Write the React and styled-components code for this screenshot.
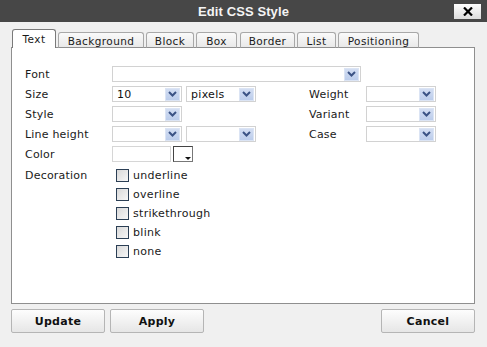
import React from "react";
import styled, { createGlobalStyle } from "styled-components";

const GlobalStyle = createGlobalStyle`
  html, body {
    margin: 0;
    padding: 0;
    background: #f0f0f0;
  }
  body {
    font-family: "DejaVu Sans", Verdana, sans-serif;
    font-size: 11px;
    color: #1a1a1a;
  }
`;

const Dialog = styled.div`
  width: 487px;
  height: 347px;
  background: #f0f0f0;
  display: flex;
  flex-direction: column;
  overflow: hidden;
`;

const TitleBar = styled.div`
  height: 22px;
  background: #474747;
  display: grid;
  grid-template-columns: 1fr auto 1fr;
  align-items: center;
`;

const Title = styled.div`
  grid-column: 2;
  color: #f4f4f4;
  font-family: "Liberation Sans", Arial, sans-serif;
  font-weight: bold;
  font-size: 13px;
  letter-spacing: 0.1px;
`;

const CloseButton = styled.button`
  grid-column: 3;
  justify-self: end;
  margin-right: 6px;
  width: 27px;
  height: 15px;
  padding: 0;
  border: none;
  background: linear-gradient(#ffffff, #dcdcdc);
  display: flex;
  align-items: center;
  justify-content: center;
  cursor: pointer;
`;

const Content = styled.div`
  padding: 7px 12px 0 11px;
  display: flex;
  flex-direction: column;
`;

const TabBar = styled.div`
  display: flex;
  align-items: flex-end;
  padding-left: 1px;
  height: 19px;
  position: relative;
  z-index: 2;
  margin-bottom: -1px;
`;

const Tab = styled.div`
  box-sizing: border-box;
  flex: none;
  width: ${(p) => p.$width}px;
  margin-right: ${(p) => p.$gap}px;
  height: ${(p) => (p.$active ? "19px" : "16px")};
  border: 1px solid ${(p) => (p.$active ? "#7a7a7a" : "#a8a8a8")};
  border-bottom: ${(p) => (p.$active ? "none" : "1px solid #8f8f8f")};
  border-radius: 3px 3px 0 0;
  background: ${(p) =>
    p.$active ? "#ffffff" : "linear-gradient(#fafafa, #e9e9e9)"};
  display: flex;
  align-items: center;
  justify-content: center;
  padding-top: ${(p) => (p.$active ? "0" : "1px")};
  color: #1a1a1a;
  font-size: 10.5px;
  letter-spacing: 0.4px;
  white-space: nowrap;
`;

const Panel = styled.div`
  box-sizing: border-box;
  height: 257px;
  background: #ffffff;
  border: 1px solid #8f8f8f;
  padding: 18px 0 0 13px;
`;

const Form = styled.div`
  display: grid;
  grid-template-columns: 87px 197px 57px auto;
  grid-auto-rows: 16px;
  row-gap: 4px;
  align-items: center;
`;

const Label = styled.div`
  align-self: ${(p) => (p.$top ? "start" : "center")};
  padding-top: ${(p) => (p.$top ? "3px" : "0")};
  letter-spacing: 0.2px;
  white-space: nowrap;
`;

const Controls = styled.div`
  display: flex;
  gap: ${(p) => p.$gap || 4}px;
  grid-column: ${(p) => p.$span || "auto"};
  align-items: center;
`;

const SelectBox = styled.div`
  box-sizing: border-box;
  width: ${(p) => p.$width}px;
  height: 16px;
  border: 1px solid #d2d2d2;
  background: #ffffff;
  display: flex;
  align-items: center;
  justify-content: space-between;
  padding: 0 1px 0 4px;
`;

const SelectValue = styled.span`
  letter-spacing: 0.3px;
  color: #111;
`;

const ArrowBox = styled.span`
  box-sizing: border-box;
  width: 15px;
  height: 13px;
  background: linear-gradient(#d3def2, #bccdec);
  border: 1px solid #dbe4f4;
  display: flex;
  align-items: center;
  justify-content: center;
`;

const ColorInput = styled.div`
  box-sizing: border-box;
  width: 59px;
  height: 16px;
  border: 1px solid #d6d6d6;
  background: #fff;
`;

const ColorPicker = styled.div`
  box-sizing: border-box;
  width: 20px;
  height: 16px;
  border: 1px solid #444;
  border-right-color: #777;
  border-bottom-color: #777;
  background: #fff;
  position: relative;
  &::after {
    content: "";
    position: absolute;
    right: 1px;
    bottom: 1px;
    border-left: 3px solid transparent;
    border-right: 3px solid transparent;
    border-top: 3px solid #111;
  }
`;

const CheckList = styled.div`
  grid-column: 2 / span 3;
  align-self: start;
  display: flex;
  flex-direction: column;
  padding-left: 4px;
`;

const CheckRow = styled.label`
  height: 19px;
  display: flex;
  align-items: center;
  gap: 4px;
  letter-spacing: 0.3px;
`;

const CheckBox = styled.span`
  box-sizing: border-box;
  width: 13px;
  height: 13px;
  border: 1px solid #2b3f55;
  background: linear-gradient(135deg, #d9d9d9, #f7f7f7);
`;

const ButtonRow = styled.div`
  display: flex;
  gap: 5px;
  margin-top: 5px;
`;

const Button = styled.button`
  box-sizing: border-box;
  width: 94px;
  height: 24px;
  margin-left: ${(p) => (p.$push ? "auto" : "0")};
  border: 1px solid #b5b5b5;
  border-radius: 2px;
  background: linear-gradient(#fdfdfd, #e6e6e6);
  font-family: "DejaVu Sans", Verdana, sans-serif;
  font-weight: bold;
  font-size: 11px;
  color: #111;
  letter-spacing: 0.3px;
  padding: 0;
`;

const Chevron = () => (
  <svg width="9" height="6" viewBox="0 0 9 6">
    <path d="M1 1 L4.5 4.5 L8 1" fill="none" stroke="#3b5385" strokeWidth="2" />
  </svg>
);

const Select = ({ width, value }) => (
  <SelectBox $width={width}>
    <SelectValue>{value}</SelectValue>
    <ArrowBox>
      <Chevron />
    </ArrowBox>
  </SelectBox>
);

const tabs = [
  { name: "Text", width: 44, gap: 2 },
  { name: "Background", width: 86, gap: 2 },
  { name: "Block", width: 48, gap: 2 },
  { name: "Box", width: 41, gap: 3 },
  { name: "Border", width: 55, gap: 2 },
  { name: "List", width: 39, gap: 2 },
  { name: "Positioning", width: 81, gap: 0 },
];
const decorations = ["underline", "overline", "strikethrough", "blink", "none"];

export default function App() {
  return (
    <>
      <GlobalStyle />
      <Dialog>
        <TitleBar>
          <Title>Edit CSS Style</Title>
          <CloseButton aria-label="close">
            <svg width="10" height="9" viewBox="0 0 10 9">
              <path d="M1 0.5 L9 8.5 M9 0.5 L1 8.5" stroke="#000" strokeWidth="2.2" />
            </svg>
          </CloseButton>
        </TitleBar>
        <Content>
          <TabBar>
            {tabs.map((t, i) => (
              <Tab key={t.name} $active={i === 0} $width={t.width} $gap={t.gap}>
                {t.name}
              </Tab>
            ))}
          </TabBar>
          <Panel>
            <Form>
              <Label>Font</Label>
              <Controls $span="2 / span 3">
                <Select width={249} />
              </Controls>

              <Label>Size</Label>
              <Controls>
                <Select width={70} value="10" />
                <Select width={70} value="pixels" />
              </Controls>
              <Label>Weight</Label>
              <Select width={70} />

              <Label>Style</Label>
              <Controls>
                <Select width={70} />
              </Controls>
              <Label>Variant</Label>
              <Select width={70} />

              <Label>Line height</Label>
              <Controls>
                <Select width={70} />
                <Select width={70} />
              </Controls>
              <Label>Case</Label>
              <Select width={70} />

              <Label>Color</Label>
              <Controls $span="2 / span 3" $gap={2}>
                <ColorInput />
                <ColorPicker />
              </Controls>

              <Label $top>Decoration</Label>
              <CheckList>
                {decorations.map((d) => (
                  <CheckRow key={d}>
                    <CheckBox />
                    {d}
                  </CheckRow>
                ))}
              </CheckList>
            </Form>
          </Panel>
          <ButtonRow>
            <Button>Update</Button>
            <Button>Apply</Button>
            <Button $push>Cancel</Button>
          </ButtonRow>
        </Content>
      </Dialog>
    </>
  );
}
